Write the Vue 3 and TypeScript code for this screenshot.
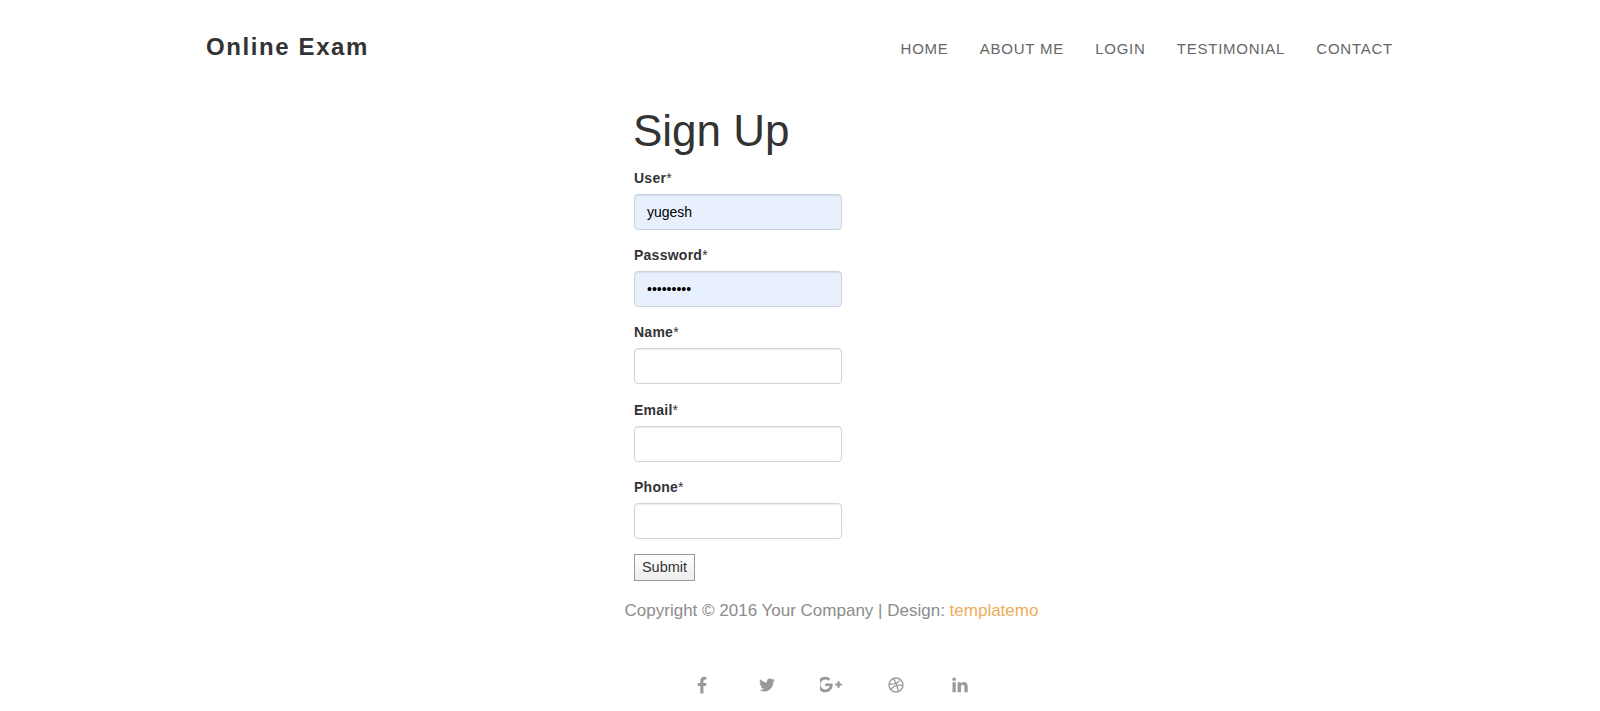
<script setup lang="ts">
interface Field {
  label: string
  type: string
  value: string
}

const links: string[] = ['Home', 'About me', 'Login', 'Testimonial', 'Contact']

const fields: Field[] = [
  { label: 'User', type: 'text', value: 'yugesh' },
  { label: 'Password', type: 'password', value: 'yugesh123' },
  { label: 'Name', type: 'text', value: '' },
  { label: 'Email', type: 'text', value: '' },
  { label: 'Phone', type: 'text', value: '' },
]
</script>

<template>
  <header class="topbar">
    <a class="brand" href="#">Online Exam</a>
    <nav class="nav">
      <a v-for="link in links" :key="link" href="#">{{ link }}</a>
    </nav>
  </header>

  <main class="signup">
    <h1>Sign Up</h1>
    <form @submit.prevent>
      <div v-for="field in fields" :key="field.label" class="group">
        <label><b>{{ field.label }}</b>*</label>
        <input :type="field.type" :value="field.value" :class="{ filled: field.value }" />
      </div>
      <button type="submit">Submit</button>
    </form>
  </main>

  <footer class="foot">
    <p>Copyright © 2016 Your Company | Design: <a href="#">templatemo</a></p>
    <div class="social">
      <span><svg viewBox="0 0 1792 1792" width="18" height="18"><path d="M1343 12v264h-157q-86 0-116 36t-30 108v189h293l-39 296h-254v759h-306v-759h-255v-296h255v-218q0-186 104-288.5t277-102.5q147 0 228 12z" transform="translate(0 80)" /></svg></span>
      <span><svg viewBox="0 0 1792 1792" width="18" height="18"><path d="M1684 408q-67 98-162 167 1 14 1 42 0 130-38 259.5t-115.5 248.5-184.5 210.5-258 146-323 54.5q-271 0-496-145 35 4 78 4 225 0 401-138-105-2-188-64.5t-114-159.5q33 5 61 5 43 0 85-11-112-23-185.5-111.5t-73.5-205.5v-4q68 38 146 41-66-44-105-115t-39-154q0-88 44-163 121 149 294.5 238.5t371.5 99.5q-8-38-8-74 0-134 94.5-228.5t228.5-94.5q140 0 236 102 109-21 205-78-37 115-142 178 92-10 184-50z" /></svg></span>
      <span><svg viewBox="0 0 2048 1792" width="22" height="19"><path d="M1181 913q0 208-87 370.5t-248 254-369 91.5q-149 0-285-58t-234-156-156-234-58-285 58-285 156-234 234-156 285-58q286 0 491 192l-199 191q-117-113-292-113-123 0-227.5 62t-165.5 168.5-61 232.5 61 232.5 165.5 168.5 227.5 62q83 0 152.5-23t114.5-57.5 78.5-78.5 49-83 21.5-74h-416v-252h692q12 63 12 122zm867-122v210h-209v209h-210v-209h-209v-210h209v-209h210v209h209z" /></svg></span>
      <span><svg viewBox="0 0 16 16" width="16" height="16" class="ball">
        <circle cx="8" cy="8" r="7" />
        <path d="M5.3 1.6c2 2.4 3.6 5.6 5 12.6M1 7.2c4 .2 8-.6 10.8-3.6M2.8 12.8c2-3.4 5.6-5.4 12-4.4" />
      </svg></span>
      <span><svg viewBox="0 0 1792 1792" width="18" height="18"><path d="M477 625v991h-330v-991h330zm21-306q1 73-50.5 122t-135.5 49h-2q-82 0-132-49t-50-122q0-74 51.5-122.5t134.5-48.5 133 48.5 51 122.5zm1166 729v568h-329v-530q0-105-40.5-164.5t-126.5-59.5q-63 0-105.5 34.5t-63.5 85.5q-11 30-11 81v553h-329q2-399 2-647t-1-296l-1-48h329v144h-2q20-32 41-56t56.5-52 87-43.5 114.5-15.5q171 0 275 113.5t104 332.5z" /></svg></span>
    </div>
  </footer>
</template>

<style scoped>
.topbar {
  display: flex;
  justify-content: space-between;
  align-items: flex-start;
  padding: 32px 207px 0 206px;
  height: 100px;
  box-sizing: border-box;
}
.brand {
  font-size: 24px;
  font-weight: 700;
  letter-spacing: 1.6px;
  line-height: 30px;
  color: #333;
  text-decoration: none;
}
.nav {
  display: flex;
  gap: 31.25px;
  padding-top: 7px;
}
.nav a {
  font-size: 15px;
  line-height: 20px;
  letter-spacing: 0.75px;
  text-transform: uppercase;
  color: #666;
  text-decoration: none;
}
.signup {
  margin-left: 634px;
  width: 208px;
}
h1 {
  margin: 0 0 6px -1px;
  font-size: 44px;
  font-weight: 400;
  line-height: 62px;
  color: #333;
}
.group {
  margin-bottom: 15.2px;
}
label {
  display: block;
  margin-bottom: 6px;
  font-size: 14px;
  letter-spacing: 0.25px;
  line-height: 20px;
  color: #333;
}
label b {
  color: #333;
}
input {
  display: block;
  box-sizing: border-box;
  width: 208px;
  height: 36px;
  padding: 6px 12px;
  border: 1px solid #d4d4d4;
  border-radius: 4px;
  box-shadow: inset 0 1px 1px rgba(0, 0, 0, 0.075);
  background: #fff;
  font: 14px "Liberation Sans", Arial, sans-serif;
  color: #000;
  outline: none;
}
input.filled {
  background: #e8f0fe;
  border-color: #ccd2dc;
}
button {
  display: block;
  box-sizing: border-box;
  width: 61px;
  height: 27px;
  margin-top: 1px;
  padding: 0 0 1px;
  border: 1px solid #999;
  border-radius: 0;
  background: linear-gradient(#fff, #ededed);
  font: 14.5px "Liberation Sans", Arial, sans-serif;
  color: #333;
}
.foot {
  padding-left: 63px;
  text-align: center;
}
.foot p {
  margin: 12.5px 0 0;
  font-size: 17px;
  line-height: 36px;
  color: #8c8c8c;
}
.foot p a {
  color: #ecae5a;
  text-decoration: none;
}
.social {
  display: flex;
  justify-content: center;
  align-items: center;
  margin-top: 46px;
  margin-left: -1px;
}
.social span {
  display: flex;
  justify-content: center;
  width: 64.5px;
}
.social svg {
  fill: #999;
}
.social .ball {
  fill: none;
  stroke: #999;
  stroke-width: 1.3;
}
</style>

<style>
body {
  font-family: "Liberation Sans", Arial, Helvetica, sans-serif;
  background: #fff;
}
</style>
